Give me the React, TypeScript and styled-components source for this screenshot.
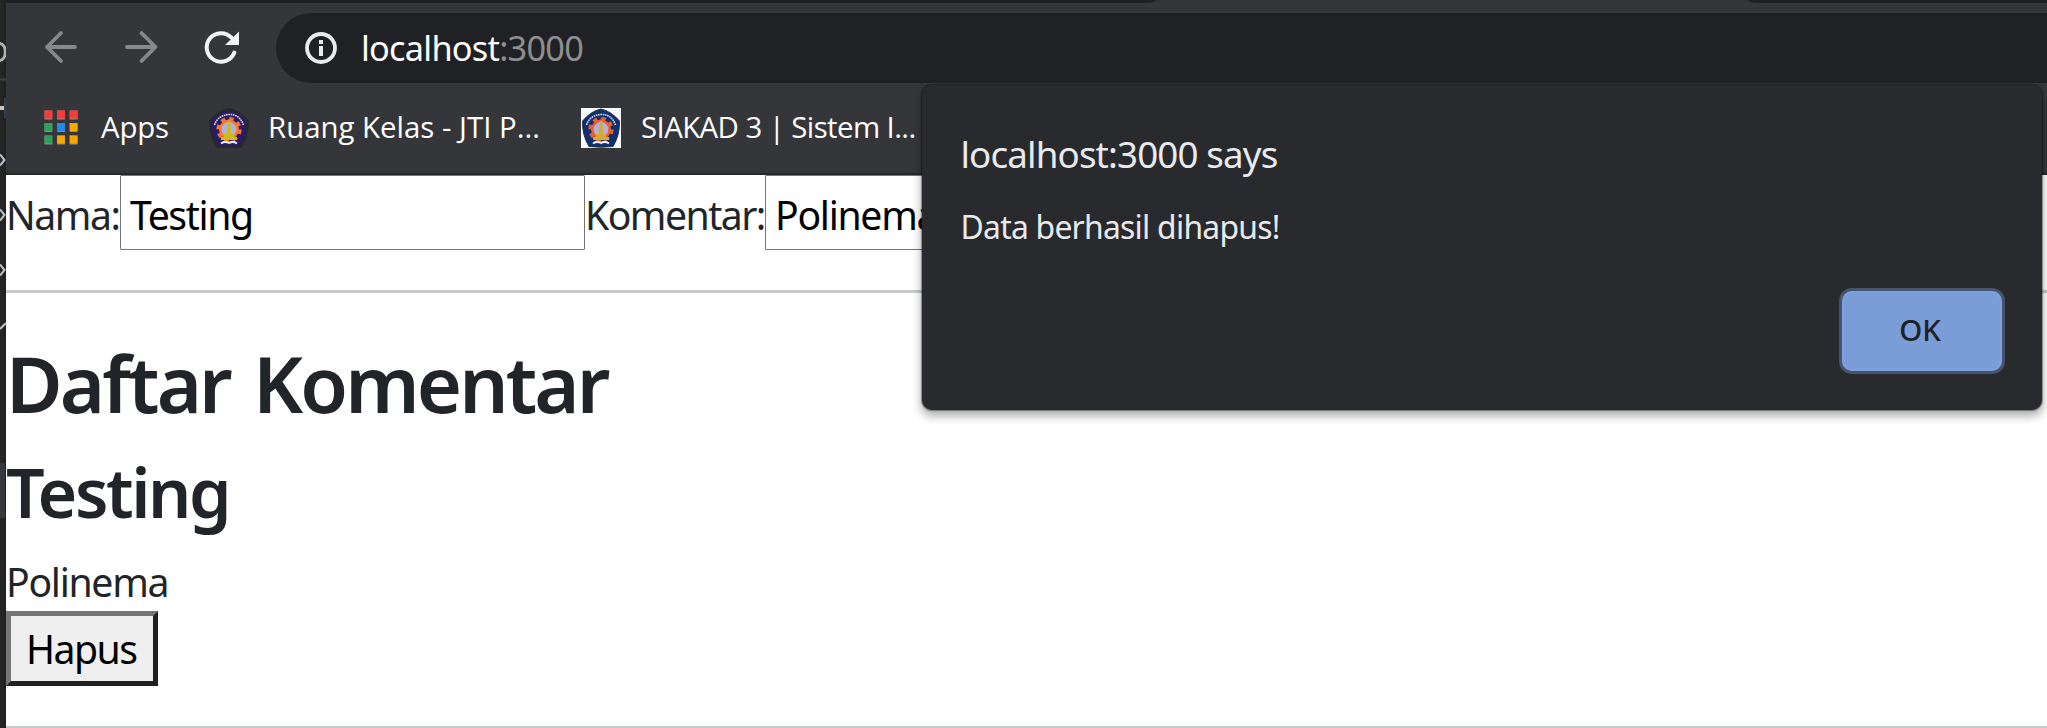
import React from "react";
import styled, { createGlobalStyle } from "styled-components";

const GlobalStyle = createGlobalStyle`
  * { box-sizing: border-box; }
  html, body { margin: 0; padding: 0; overflow: hidden; background: #fff; }
  body, input, button { font-family: "Noto Sans", "Open Sans", sans-serif; }
`;

const Screen = styled.div`
  position: relative;
  display: flex;
  width: 2047px;
  height: 728px;
  overflow: hidden;
`;

const EditorEdge = styled.div`
  flex: 0 0 6px;
  height: 728px;
  background: linear-gradient(90deg, #252526 0, #252526 3px, #1f1f1f 5px, #222 6px);
  svg { display: block; }
`;

const Browser = styled.div`
  flex: 1;
  min-width: 0;
  display: flex;
  flex-direction: column;
`;

const Chrome = styled.header`
  flex: none;
  height: 175px;
  background: #35363a;
  border-bottom: 2px solid #292829;
`;

const TabStrip = styled.div`
  display: flex;
  justify-content: space-between;
  height: 3px;
`;

const TabGap = styled.div<{ $width: number; $side: "left" | "right" }>`
  width: ${(p) => p.$width}px;
  background: #202124;
  border-radius: ${(p) => (p.$side === "left" ? "0 0 9px 0 / 0 0 3px 0" : "0 0 0 9px / 0 0 0 3px")};
`;

const NavRow = styled.div`
  display: flex;
  height: 90px;
  padding-top: 10px;
`;

const NavIcons = styled.div`
  display: flex;
  align-items: center;
  width: 270px;
  height: 68px;
  padding-left: 35px;
  gap: 28px;
  svg { display: block; flex: none; }
`;

const AddressBar = styled.div`
  flex: 1;
  display: flex;
  align-items: center;
  height: 70px;
  padding-left: 29px;
  border-radius: 35px 0 0 35px;
  background: #202124;
  color: #fff;
  font-size: 34.3px;
  letter-spacing: -0.75px;
  line-height: 70px;
  white-space: pre;
  svg { flex: none; margin-right: 24px; }
`;

const Port = styled.span`
  color: #8d8e90;
`;

const BookmarkRow = styled.nav`
  display: flex;
  align-items: center;
  height: 70px;
  padding-left: 38px;
`;

const Bookmark = styled.div<{ $width: number; $gap: number; $tracking: number }>`
  display: flex;
  align-items: center;
  flex: none;
  width: ${(p) => p.$width}px;
  gap: ${(p) => p.$gap}px;
  color: #fff;
  font-family: "Open Sans", sans-serif;
  font-size: 29.4px;
  letter-spacing: ${(p) => p.$tracking}px;
  line-height: 40px;
  white-space: nowrap;
  svg { display: block; flex: none; }
  span { padding-bottom: 3px; }
`;

const Page = styled.main`
  color: #212529;
`;

const FormRow = styled.form`
  display: flex;
  height: 75px;
`;

const Label = styled.label<{ $width: number; $tracking: number }>`
  flex: none;
  width: ${(p) => p.$width}px;
  padding-top: 2px;
  font-size: 39.2px;
  line-height: 75px;
  letter-spacing: ${(p) => p.$tracking}px;
  white-space: nowrap;
`;

const Field = styled.input<{ $tracking: number }>`
  flex: none;
  width: 465px;
  height: 75px;
  padding: 4px 9px 0;
  border: 1px solid #767676;
  border-radius: 1px;
  outline: none;
  background: #fff;
  color: #000;
  font-size: 39.2px;
  letter-spacing: ${(p) => p.$tracking}px;
`;

const Rule = styled.hr`
  height: 3px;
  margin: 40px 0 0;
  border: 0;
  background: #c8c9ca;
`;

const Title = styled.h1`
  margin: 42px 0 0;
  font-size: 77.5px;
  font-weight: 600;
  line-height: 96px;
  letter-spacing: -2.9px;
  word-spacing: 6px;
`;

const Author = styled.h3`
  margin: 19px 0 0;
  font-size: 68px;
  font-weight: 600;
  line-height: 84px;
  letter-spacing: -2.4px;
`;

const Comment = styled.p`
  margin: 18px 0 0;
  font-size: 39.2px;
  line-height: 60px;
  letter-spacing: -1.3px;
`;

const DeleteButton = styled.button`
  display: block;
  width: 152px;
  height: 75px;
  margin-top: -1px;
  padding: 0 0 0 15px;
  border: 5px solid;
  border-color: #767676 #212121 #212121 #767676;
  border-radius: 0;
  background: #efefef;
  color: #000;
  font-size: 39.2px;
  line-height: 65px;
  letter-spacing: -1.5px;
  text-align: left;
`;

const Dialog = styled.section`
  position: absolute;
  left: 921.5px;
  top: 85px;
  display: flex;
  flex-direction: column;
  width: 1120px;
  height: 325px;
  padding: 44px 40px 39px 39px;
  border-radius: 10px;
  background: #292a2d;
  color: #e8eaed;
  box-shadow: 0 0 1px 1px rgba(0, 0, 0, 0.35), 0 5px 10px 1px rgba(0, 0, 0, 0.32);
`;

const DialogTitle = styled.div`
  font-size: 36.75px;
  line-height: 50px;
  letter-spacing: -0.86px;
`;

const DialogMessage = styled.div`
  margin-top: 26px;
  font-size: 31.85px;
  line-height: 44px;
  letter-spacing: -0.74px;
`;

const OkButton = styled.button`
  align-self: flex-end;
  width: 160px;
  height: 80px;
  margin-top: auto;
  padding: 0 3px 3px 0;
  border: 2px solid #7da2e2;
  border-radius: 10px;
  background: #7a9dd8;
  box-shadow: 0 0 0 3px #48546d;
  color: #202124;
  font-size: 29.4px;
  font-weight: 500;
  letter-spacing: 0;
`;

const EdgeFragments = () => (
  <svg width="6" height="728" viewBox="0 0 6 728" fill="none">
    <rect y="463" width="5" height="55" fill="#37373d" />
    <path d="M-1 43.5C3 43.5 5.3 47 5.3 52S3 60.5-1 60.5" stroke="#b4b4b4" strokeWidth="3" />
    <path d="M0 79.500H6" stroke="#444" strokeWidth="2" />
    <path d="M0 108H4" stroke="#c8c8c8" strokeWidth="4" />
    <path d="M5 98V118" stroke="#285064" strokeWidth="1.500" />
    <path d="M0 154.500L4.500 160L0 165.500M0 209.500L4.500 215L0 220.500M0 264.500L4.500 270L0 275.500M0 329L6 323" stroke="#b9c3c9" strokeWidth="2" />
  </svg>
);

const Arrow = ({ forward = false }: { forward?: boolean }) => (
  <svg width="52" height="40" viewBox="0 0 52 40" fill="none" stroke="#87888b" strokeWidth="3.800" strokeLinecap="round" strokeLinejoin="round">
    {forward ? <path d="M6 20H34M20.500 6L34.500 20L20.500 34" /> : <path d="M34 20H6M20 6L6 20L20 34" />}
  </svg>
);

const Reload = () => (
  <svg width="40" height="40" viewBox="0 0 40 40">
    <path d="M33.400 25.500A14.300 14.300 0 1 1 30.500 10.700" fill="none" stroke="#f1f3f4" strokeWidth="4" strokeLinecap="round" />
    <path d="M38 4.500V18H24Z" fill="#f1f3f4" />
  </svg>
);

const Info = () => (
  <svg width="32" height="32" viewBox="0 0 32 32">
    <circle cx="16" cy="16" r="14" fill="none" stroke="#e8eaed" strokeWidth="3.800" />
    <path d="M14 8h4v4h-4zM14 14h4v10h-4z" fill="#e8eaed" />
  </svg>
);

const tiles = ["#fa3a34", "#fa3a34", "#fa3a34", "#2fa05a", "#2188f4", "#f7a800", "#2fa05a", "#f7a800", "#f7a800"];

const AppsIcon = () => (
  <svg width="34" height="36" viewBox="0 0 34 36">
    {tiles.map((fill, i) => {
      const x = 0.5 + (i % 3) * 12.6;
      const y = 0.5 + Math.floor(i / 3) * 12.5;
      return (
        <g key={i}>
          <rect x={x} y={y} width="7.800" height="9" fill="#8d8f91" />
          <rect x={x} y={y} width="7.800" height="8" fill={fill} />
        </g>
      );
    })}
  </svg>
);

const Crest = ({ boxed = false }: { boxed?: boolean }) => (
  <svg width="40" height="40" viewBox="0 0 40 40">
    {boxed && <rect width="40" height="40" fill="#fafafa" />}
    <path
      d="M20 1Q30 3 38.500 13Q39 27 32 38.500Q20 40 8 38.500Q1 27 1.500 13Q10 3 20 1Z"
      fill={boxed ? "#0e2f72" : "#2b1b66"}
      stroke={boxed ? "#26343d" : "#28282c"}
      strokeWidth={boxed ? 1 : 2.5}
    />
    <path d="M5.500 17C8 10 13 7 20 6.500S32 10 34.500 17" fill="none" stroke="#d5d8ea" strokeWidth="1.600" strokeDasharray="1.600 .700" />
    <circle cx="20" cy="21.500" r="10.600" fill="none" stroke={boxed ? "#ee5d2c" : "#f5782b"} strokeWidth="4" strokeDasharray="4.300 4.025" />
    <circle cx="20" cy="21.500" r="8.700" fill="#b3b1d8" stroke={boxed ? "#ee5d2c" : "#f5782b"} strokeWidth="2.600" />
    <path d="M20 10L21.600 18L22.400 26H25V29H28V32H12V29H15V26H17.600L18.400 18Z" fill={boxed ? "#d4aa32" : "#cbbb1d"} />
    <path d="M12 35.500Q16 32.500 20 35Q24 32.500 28 35.500" fill="none" stroke="#eef0f4" strokeWidth="2" />
  </svg>
);

export default function App() {
  return (
    <>
      <GlobalStyle />
      <Screen>
        <EditorEdge>
          <EdgeFragments />
        </EditorEdge>
        <Browser>
          <Chrome>
            <TabStrip>
              <TabGap $width={1150} $side="left" />
              <TabGap $width={299} $side="right" />
            </TabStrip>
            <NavRow>
              <NavIcons>
                <Arrow />
                <Arrow forward />
                <Reload />
              </NavIcons>
              <AddressBar>
                <Info />
                <span>localhost</span>
                <Port>:3000</Port>
              </AddressBar>
            </NavRow>
            <BookmarkRow>
              <Bookmark $width={165} $gap={23} $tracking={-0.2}>
                <AppsIcon />
                <span>Apps</span>
              </Bookmark>
              <Bookmark $width={372} $gap={19} $tracking={0}>
                <Crest />
                <span>Ruang Kelas - JTI P...</span>
              </Bookmark>
              <Bookmark $width={340} $gap={20} $tracking={-0.58}>
                <Crest boxed />
                <span>SIAKAD 3 | Sistem I...</span>
              </Bookmark>
            </BookmarkRow>
          </Chrome>
          <Page>
            <FormRow>
              <Label $width={114} $tracking={-1.5}>Nama:</Label>
              <Field $tracking={-1.4} value="Testing" readOnly />
              <Label $width={180} $tracking={-1.55}>Komentar:</Label>
              <Field $tracking={-1.3} value="Polinema" readOnly />
            </FormRow>
            <Rule />
            <Title>Daftar Komentar</Title>
            <Author>Testing</Author>
            <Comment>Polinema</Comment>
            <DeleteButton>Hapus</DeleteButton>
            <Rule />
          </Page>
        </Browser>
        <Dialog role="alertdialog">
          <DialogTitle>localhost:3000 says</DialogTitle>
          <DialogMessage>Data berhasil dihapus!</DialogMessage>
          <OkButton>OK</OkButton>
        </Dialog>
      </Screen>
    </>
  );
}
